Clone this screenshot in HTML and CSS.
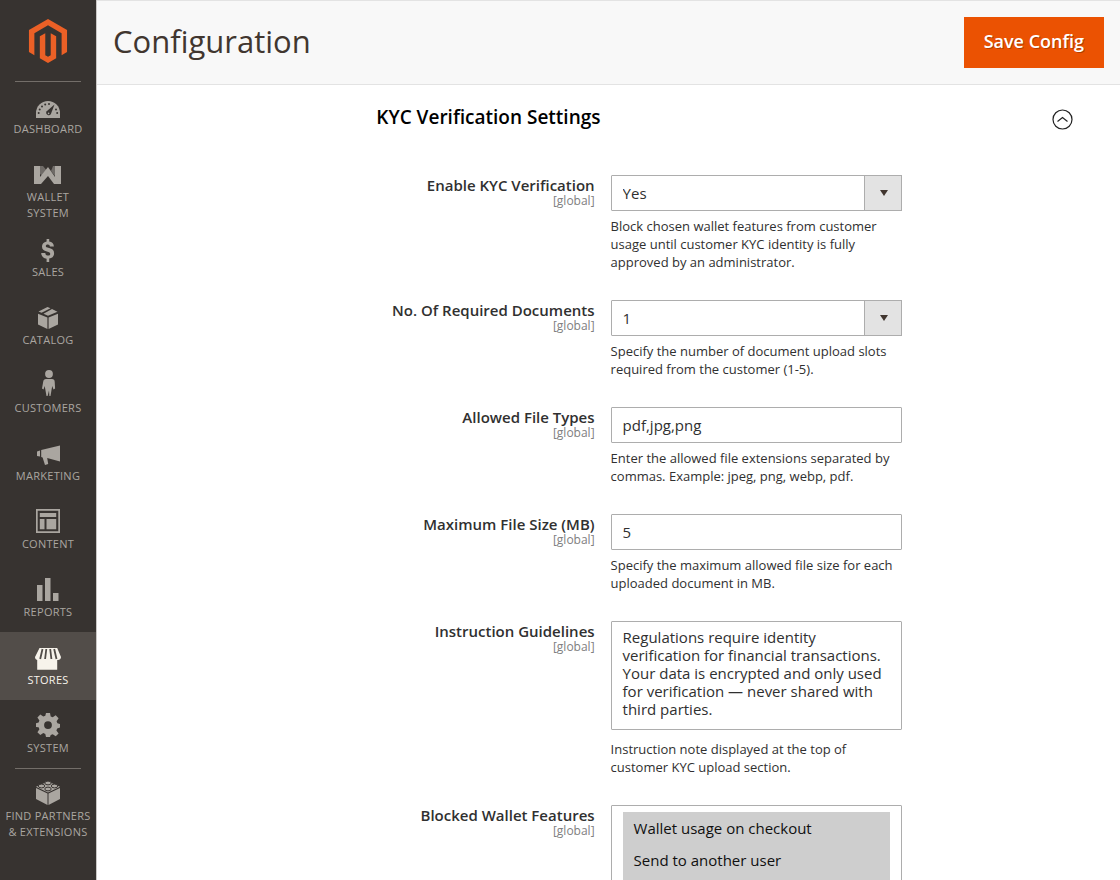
FILE: index.html
```html
<!DOCTYPE html>
<html lang="en">
  <head>
    <meta charset="UTF-8" />
    <meta name="viewport" content="width=device-width, initial-scale=1.0" />
    <title>Configuration</title>
    <link rel="stylesheet" href="styles.css">
  </head>
  <body>
    <div class="page">
      <nav class="sidebar" aria-label="Main menu">
        <a href="#" class="logo" aria-label="Home">
          <svg width="44" height="44" viewBox="0 0 24 24"><path d="M12 24l-4.455-2.573v-12l2.97-1.715v12.001l1.485.902 1.485-.902V7.712l2.971 1.715v12L12 24zM22.391 6v12l-2.969 1.714V7.713L12 3.43 4.574 7.713v12.001L1.609 18V6L12 0l10.391 6z"/></svg>
        </a>
        <ul class="menu">
          <li class="ruled">
            <a href="#">
              <svg class="icon" viewBox="0 0 28 28"><path d="M2 25v-5a12 12 0 0 1 24 0v5z"/><g fill="#373330"><circle cx="4.700" cy="20" r="1"/><circle cx="5.700" cy="16.400" r="1"/><circle cx="8" cy="13.500" r="1"/><circle cx="11.200" cy="11.500" r="1"/><circle cx="15" cy="11" r="1"/><circle cx="22" cy="16.400" r="1"/><circle cx="23.200" cy="20" r="1"/><path d="M20.500 11.500L16.900 21a2.500 2.500 0 1 1-4.200-2.800z"/></g><circle cx="14.600" cy="20.400" r=".8"/></svg>
              Dashboard
            </a>
          </li>
          <li class="two-lines">
            <a href="#">
              <svg class="icon" viewBox="0 0 28 28"><path d="M0 5h6v11l8-10 7 10V5h6v18h-7l-6-8-7 8H0z"/><path d="M6 5h3l5 6-4 5-4-3zM19 5h2v10l-4-5z" opacity=".5"/></svg>
              Wallet<br>System
            </a>
          </li>
          <li>
            <a href="#">
              <svg class="icon" viewBox="0 0 28 28"><path d="M12.600 3h2.600v2.500c2.800.4 4.600 2.200 4.700 5h-4c-.1-1.300-.8-2-2.100-2-1.300 0-2 .6-2 1.500 0 1 .8 1.400 3.300 2.100 3.300.9 5 2.200 5 5.200 0 3.100-2 4.900-4.900 5.300V26h-2.600v-3.300c-3.300-.4-5.300-2.400-5.400-5.800h4.100c.1 1.700 1.100 2.700 2.900 2.700 1.300 0 2-.7 2-1.700 0-1.200-.8-1.600-3.300-2.300-3.200-.9-4.900-2-4.900-5 0-2.700 1.700-4.600 4.600-5.100z"/></svg>
              Sales
            </a>
          </li>
          <li>
            <a href="#">
              <svg class="icon" viewBox="0 0 28 28"><path d="M4 9.800l9.400 3.600V25L4 20.500zM24 9.800l-9.400 3.600V25l9.400-4.500zM13.500 3l3 1.300-9 4.500-3-1.300zM18 5l5.500 2.700-9.500 4-4.500-2z"/></svg>
              Catalog
            </a>
          </li>
          <li>
            <a href="#">
              <svg class="icon" viewBox="0 0 28 28"><circle cx="15" cy="2" r="3.900"/><path d="M12 7h6c1.800 0 2.600 1 2.700 2.800l.4 6.700-1.600 1-1.300-3.500-1.700 10h-1.100L15 18.500 13.600 24h-1.100l-1.800-10-1.200 3.500-1.500-1 1.200-6.700C9.500 8 10.300 7 12 7z"/></svg>
              Customers
            </a>
          </li>
          <li>
            <a href="#">
              <svg class="icon" viewBox="0 0 28 28"><path d="M3 11.500l3-1v6l-3-.5zM7.200 10L26 5.500v16L13.200 18l1 6-3.200 1-2.400-7.500-1.400-.5z"/></svg>
              Marketing
            </a>
          </li>
          <li>
            <a href="#">
              <svg class="icon" viewBox="0 0 28 28"><path fill-rule="evenodd" d="M2 1h24v24H2zM3.700 2.700v20.600h20.600V2.700z"/><path d="M5.800 5h16.400v4H5.800zM5.800 11h4.700v10.300H5.800zM12.500 11h9.700v10.300h-9.700z"/></svg>
              Content
            </a>
          </li>
          <li>
            <a href="#">
              <svg class="icon" viewBox="0 0 28 28"><path d="M3 9h5.500v16H3zM11 2h5.500v23H11zM19 17h5.500v8H19z"/></svg>
              Reports
            </a>
          </li>
          <li class="current">
            <a href="#">
              <svg class="icon" viewBox="0 0 28 28"><path d="M5.500 4h17.700l3.800 9c0 2-1.400 3-3 3h-.8v9.800H3.200V16C1.800 15.600 1 14.500 1 13z"/><path d="M8.500 5L6.200 15M12.300 5l-1.200 10M16.200 5l1.200 10M20.200 5l2.300 10" fill="none" stroke="#524d49" stroke-width="1.800"/></svg>
              Stores
            </a>
          </li>
          <li>
            <a href="#">
              <svg class="icon" viewBox="0 0 28 28"><path fill-rule="evenodd" d="M12 1h4l.7 3.500 2 .8 3-2 2.900 2.900-2 3 .8 2 2.600.7v3.700l-2.800.8-.8 2 2.200 3-2.900 2.900-3-2-2 .8L16 25h-4l-.7-3.100-2-.8-3 2-2.900-2.900 2-3-.8-2L2 14.900v-3.700l2.600-.8.8-2-2-3 2.900-2.900 3 2 2-.8zM14 9.200a3.900 3.900 0 1 0 0 7.800 3.900 3.900 0 0 0 0-7.800z"/></svg>
              System
            </a>
          </li>
          <li class="ruled">
            <a href="#">
              <svg class="icon" viewBox="0 0 28 28"><path d="M2 8l11.500 5.500V25L2 19zM26 8l-11.500 5.500V25L26 19z"/><path d="M14 1.500l12 5.300-12 5.700L2 6.800z"/><g stroke="#373330" stroke-width="1"><ellipse cx="14" cy="3" rx="3.200" ry="1.900"/><ellipse cx="7.500" cy="6" rx="3.200" ry="1.900"/><ellipse cx="20.500" cy="6" rx="3.200" ry="1.900"/><ellipse cx="14" cy="9" rx="3.200" ry="1.900"/></g></svg>
              Find Partners<br>&amp; Extensions
            </a>
          </li>
        </ul>
      </nav>

      <main class="content">
        <header class="page-header">
          <h1>Configuration</h1>
          <button type="submit" form="configForm" class="save">Save Config</button>
        </header>

        <form id="configForm" class="config">
          <div class="section-head">
            <h2>KYC Verification Settings</h2>
            <button type="button" class="toggle" aria-label="Collapse section">
              <svg width="21" height="21" viewBox="0 0 21 21"><circle cx="10.500" cy="10.500" r="9.500"/><path d="M5.500 12.500l5-4 5 4"/></svg>
            </button>
          </div>

          <div class="field">
            <label for="enable">Enable KYC Verification <span class="scope">[global]</span></label>
            <div class="value">
              <div class="dropdown">
                <select id="enable">
                  <option selected>Yes</option>
                  <option>No</option>
                </select>
              </div>
              <p class="note">Block chosen wallet features from customer usage until customer KYC identity is fully approved by an administrator.</p>
            </div>
          </div>

          <div class="field">
            <label for="documents">No. Of Required Documents <span class="scope">[global]</span></label>
            <div class="value">
              <div class="dropdown">
                <select id="documents">
                  <option selected>1</option>
                  <option>2</option>
                  <option>3</option>
                  <option>4</option>
                  <option>5</option>
                </select>
              </div>
              <p class="note">Specify the number of document upload slots required from the customer (1-5).</p>
            </div>
          </div>

          <div class="field">
            <label for="types">Allowed File Types <span class="scope">[global]</span></label>
            <div class="value">
              <input type="text" id="types" value="pdf,jpg,png">
              <p class="note">Enter the allowed file extensions separated by commas. Example: jpeg, png, webp, pdf.</p>
            </div>
          </div>

          <div class="field">
            <label for="size">Maximum File Size (MB) <span class="scope">[global]</span></label>
            <div class="value">
              <input type="text" id="size" value="5">
              <p class="note">Specify the maximum allowed file size for each uploaded document in MB.</p>
            </div>
          </div>

          <div class="field">
            <label for="guidelines">Instruction Guidelines <span class="scope">[global]</span></label>
            <div class="value">
              <textarea id="guidelines" rows="5">Regulations require identity verification for financial transactions. Your data is encrypted and only used for verification — never shared with third parties.</textarea>
              <p class="note">Instruction note displayed at the top of customer KYC upload section.</p>
            </div>
          </div>

          <div class="field">
            <label for="blocked">Blocked Wallet Features <span class="scope">[global]</span></label>
            <div class="value">
              <select id="blocked" multiple size="3">
                <option selected>Wallet usage on checkout</option>
                <option selected>Send to another user</option>
                <option selected>Transfer to bank</option>
              </select>
            </div>
          </div>
        </form>
      </main>
    </div>
  </body>
</html>
```
FILE: styles.css
```css
*,
*::before,
*::after {
  box-sizing: border-box;
}

body {
  margin: 0;
  font-family: "Open Sans", "Noto Sans", sans-serif;
  font-size: 15px;
  color: #303030;
  background-color: #fff;
}

.page {
  display: flex;
  height: 100vh;
  overflow: hidden;
}

/* sidebar */
.sidebar {
  width: 97px;
  flex-shrink: 0;
  background-color: #373330;
  border-right: 1px solid #cac8c6;
}

.logo {
  display: flex;
  justify-content: center;
  padding: 19px 0 18px;
}

.logo svg {
  fill: #eb6026;
}

.menu {
  list-style: none;
  margin: 0;
  padding: 0;
}

.menu li {
  position: relative;
}

.menu a {
  display: block;
  padding: 12px 0;
  font-size: 11px;
  line-height: 16px;
  text-align: center;
  text-decoration: none;
  text-transform: uppercase;
  letter-spacing: .025em;
  color: #aaa6a0;
}

.menu .two-lines a {
  padding-bottom: 3px;
}

.menu .ruled::before {
  content: "";
  position: absolute;
  top: 0;
  left: 15px;
  right: 15px;
  border-top: 1px solid #736e69;
}

.menu .current {
  background-color: #524d49;
}

.menu .current a {
  color: #f7f3eb;
}

.icon {
  display: block;
  width: 28px;
  height: 28px;
  margin: 0 auto;
  fill: currentColor;
  overflow: visible;
}

/* header */
.content {
  flex: 1;
  min-width: 0;
}

.page-header {
  display: flex;
  justify-content: space-between;
  align-items: flex-start;
  padding: 16px;
  background-color: #f8f8f8;
  border-top: 1px solid #e3e3e3;
  border-bottom: 1px solid #e3e3e3;
}

h1 {
  margin: 0;
  font-size: 31px;
  line-height: 48px;
  font-weight: 400;
  color: #41362f;
}

.save {
  padding: 11px 19px 13px;
  border: 1px solid #eb5202;
  background-color: #eb5202;
  color: #fff;
  font-family: inherit;
  font-size: 18px;
  line-height: 25px;
  font-weight: 600;
  text-shadow: 1px 1px 0 rgba(0, 0, 0, .25);
  cursor: pointer;
}

/* form */
.config {
  margin: 0 16px 0 27.3%;
  padding-top: 18px;
}

.section-head {
  display: flex;
  justify-content: space-between;
  align-items: center;
  padding-right: 31px;
  margin-bottom: 44px;
}

h2 {
  margin: 0;
  font-size: 19px;
  line-height: 28px;
  font-weight: 600;
  color: #000;
}

.toggle {
  display: flex;
  padding: 4px 0 0;
  border: 0;
  background: none;
  cursor: pointer;
}

.toggle svg {
  fill: none;
  stroke: #222;
  stroke-width: 1.2;
}

.field {
  display: grid;
  grid-template-columns: 30% 40%;
  column-gap: 16px;
  margin-bottom: 29px;
}

.field label {
  font-size: 15px;
  line-height: 20px;
  font-weight: 600;
  text-align: right;
}

.scope {
  display: block;
  font-size: 12px;
  line-height: 12px;
  font-weight: 400;
  color: #808080;
}

input,
textarea,
select {
  width: 100%;
  border: 1px solid #adadad;
  border-radius: 1px;
  background-color: #fff;
  color: #303030;
  font-family: inherit;
  font-size: 15px;
}

input,
.dropdown select {
  display: block;
  height: 36px;
  padding: 0 11px;
}

.dropdown {
  position: relative;
}

.dropdown select {
  appearance: none;
  padding-right: 49px;
}

.dropdown::before {
  content: "";
  position: absolute;
  top: 0;
  right: 0;
  bottom: 0;
  width: 38px;
  border: 1px solid #adadad;
  background-color: #e3e3e3;
  pointer-events: none;
}

.dropdown::after {
  content: "";
  position: absolute;
  top: 15px;
  right: 14px;
  border: solid transparent;
  border-width: 6px 4px 0;
  border-top-color: #41362f;
  pointer-events: none;
}

textarea {
  height: 109px;
  padding: 6px 11px;
  line-height: 18px;
  resize: none;
}

select[multiple] {
  height: 110px;
  padding: 6px 11px;
  overflow: hidden;
}

select[multiple] option {
  min-height: 32px;
  padding: 6px 11px;
  line-height: 20px;
}

.note {
  margin: 6px 0 0;
  font-size: 13px;
  line-height: 18px;
}
```
